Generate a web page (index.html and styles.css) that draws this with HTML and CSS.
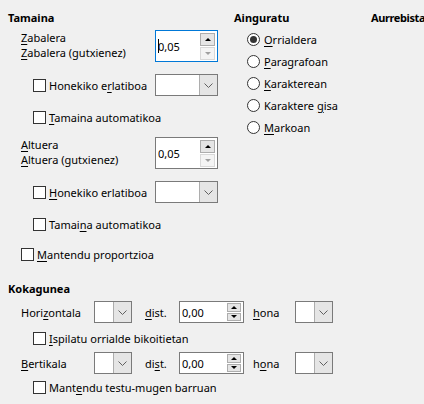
FILE: index.html
```html
<!DOCTYPE html>
<html lang="eu">
<head>
<meta charset="utf-8">
<title>Kokapena eta tamaina</title>
<link rel="stylesheet" href="styles.css">
</head>
<body>
<div class="dlg">
  <div class="top">
    <section class="size">
      <h3 class="hd">Tamaina</h3>
      <div class="dim">
        <div class="lbls"><span><u>Z</u>abalera</span><span><u>Z</u>abalera (gutxienez)</span></div>
        <div class="spin big focus">
          <span class="val"><i class="caret"></i>0,05</span>
          <span class="btns"><span class="sb up"><i class="tri-up"></i></span><span class="sb dn off"><i class="tri-dn"></i></span></span>
        </div>
      </div>
      <div class="crow r1">
        <label class="chk"><span class="box"></span><span>Honekiko e<u>r</u>latiboa</span></label>
        <div class="combo wide"><span class="cbtn"><svg width="9" height="5" viewBox="0 0 9 5"><path d="M0.5 0.5 L4.5 4.5 L8.5 0.5" fill="none" stroke="#606060" stroke-width="1"/></svg></span></div>
      </div>
      <div class="crow r2">
        <label class="chk"><span class="box"></span><span><u>T</u>amaina automatikoa</span></label>
      </div>
      <div class="dim d2">
        <div class="lbls"><span><u>A</u>ltuera</span><span><u>A</u>ltuera (gutxienez)</span></div>
        <div class="spin big">
          <span class="val">0,05</span>
          <span class="btns"><span class="sb up"><i class="tri-up"></i></span><span class="sb dn off"><i class="tri-dn"></i></span></span>
        </div>
      </div>
      <div class="crow r1">
        <label class="chk"><span class="box"></span><span><u>H</u>onekiko erlatiboa</span></label>
        <div class="combo wide"><span class="cbtn"><svg width="9" height="5" viewBox="0 0 9 5"><path d="M0.5 0.5 L4.5 4.5 L8.5 0.5" fill="none" stroke="#606060" stroke-width="1"/></svg></span></div>
      </div>
      <div class="crow r2">
        <label class="chk"><span class="box"></span><span>Tamai<u>n</u>a automatikoa</span></label>
      </div>
      <div class="crow r3">
        <label class="chk"><span class="box"></span><span><u>M</u>antendu proportzioa</span></label>
      </div>
    </section>
    <section class="anchor">
      <h3 class="hd">Ainguratu</h3>
      <div class="radios">
        <label class="rad"><span class="circ on"></span><span><u>O</u>rrialdera</span></label>
        <label class="rad"><span class="circ"></span><span><u>P</u>aragrafoan</span></label>
        <label class="rad"><span class="circ"></span><span><u>K</u>arakterean</span></label>
        <label class="rad"><span class="circ"></span><span>Karaktere <u>g</u>isa</span></label>
        <label class="rad"><span class="circ"></span><span><u>M</u>arkoan</span></label>
      </div>
    </section>
    <section class="preview">
      <h3 class="hd tight">Aurrebista</h3>
    </section>
  </div>
  <section class="pos">
    <h3 class="hd">Kokagunea</h3>
    <div class="prow p1">
      <span class="plbl">Hori<u>z</u>ontala</span>
      <div class="combo small"><span class="cbtn"><svg width="9" height="5" viewBox="0 0 9 5"><path d="M0.5 0.5 L4.5 4.5 L8.5 0.5" fill="none" stroke="#606060" stroke-width="1"/></svg></span></div>
      <span class="dist"><u>d</u>ist.</span>
      <div class="spin sm">
        <span class="val">0,00</span>
        <span class="btns"><span class="sb up"><i class="tri-up"></i></span><span class="sb dn"><i class="tri-dn"></i></span></span>
      </div>
      <span class="hona"><u>h</u>ona</span>
      <div class="combo small"><span class="cbtn"><svg width="9" height="5" viewBox="0 0 9 5"><path d="M0.5 0.5 L4.5 4.5 L8.5 0.5" fill="none" stroke="#606060" stroke-width="1"/></svg></span></div>
    </div>
    <div class="crow p2">
      <label class="chk"><span class="box"></span><span><u>I</u>spilatu orrialde bikoitietan</span></label>
    </div>
    <div class="prow p3">
      <span class="plbl"><u>B</u>ertikala</span>
      <div class="combo small"><span class="cbtn"><svg width="9" height="5" viewBox="0 0 9 5"><path d="M0.5 0.5 L4.5 4.5 L8.5 0.5" fill="none" stroke="#606060" stroke-width="1"/></svg></span></div>
      <span class="dist">di<u>s</u>t.</span>
      <div class="spin sm">
        <span class="val">0,00</span>
        <span class="btns"><span class="sb up"><i class="tri-up"></i></span><span class="sb dn"><i class="tri-dn"></i></span></span>
      </div>
      <span class="hona">h<u>o</u>na</span>
      <div class="combo small"><span class="cbtn"><svg width="9" height="5" viewBox="0 0 9 5"><path d="M0.5 0.5 L4.5 4.5 L8.5 0.5" fill="none" stroke="#606060" stroke-width="1"/></svg></span></div>
    </div>
    <div class="crow p4">
      <label class="chk"><span class="box"></span><span>Mant<u>e</u>ndu testu-mugen barruan</span></label>
    </div>
  </section>
</div>
</body>
</html>
```

FILE: styles.css
```css
html, body {
  margin: 0;
  padding: 0;
}
body {
  width: 424px;
  height: 404px;
  overflow: hidden;
  background: #f0f0f0;
  color: #000;
  font-family: "Noto Sans", "Open Sans", sans-serif;
  font-size: 11px;
  line-height: 15px;
}
u {
  text-decoration: underline;
  text-underline-offset: 2px;
  text-decoration-thickness: 1px;
}
.dlg {
  padding: 10px 0 0 8px;
}
.top {
  display: flex;
}
.hd {
  margin: 0;
  font-size: 11px;
  line-height: 15px;
  font-weight: bold;
  white-space: nowrap;
}
.hd.tight {
  letter-spacing: -0.4px;
}
.size {
  flex: none;
  width: 210px;
  display: flex;
  flex-direction: column;
}
.anchor {
  flex: none;
  margin-left: 16px;
  width: 137px;
}
.preview {
  flex: none;
}
.dim {
  display: flex;
  justify-content: space-between;
  margin: 5px 0 0 13px;
}
.dim.d2 {
  margin-top: 9px;
}
.lbls {
  display: flex;
  flex-direction: column;
}
.spin {
  box-sizing: border-box;
  border: 1px solid #7a7a7a;
  background: #fff;
  display: flex;
  align-items: center;
}
.spin.big {
  width: 63px;
  height: 32px;
}
.spin.focus {
  border-color: #0078d7;
}
.spin.sm {
  width: 65px;
  height: 22px;
}
.val {
  flex: 1;
  padding-left: 2px;
  display: flex;
  align-items: center;
}
.caret {
  display: inline-block;
  width: 1px;
  height: 14px;
  background: #000;
  margin-right: -1px;
}
.btns {
  display: flex;
  flex-direction: column;
  align-self: stretch;
  justify-content: center;
  margin: 1px 2px 1px 0;
  gap: 1px;
}
.sb {
  box-sizing: border-box;
  width: 15px;
  border: 1px solid #adadad;
  background: #e5e5e5;
  display: flex;
  align-items: center;
  justify-content: center;
}
.big .sb {
  height: 13px;
}
.sm .sb {
  height: 9px;
  width: 14px;
}
.sb.off {
  border-color: #d9d9d9;
  background: #f4f4f4;
}
.tri-up, .tri-dn {
  display: block;
  width: 0;
  height: 0;
  border-left: 3px solid transparent;
  border-right: 3px solid transparent;
}
.tri-up {
  border-bottom: 3px solid #000;
}
.tri-dn {
  border-top: 3px solid #000;
}
.off .tri-dn {
  border-top-color: #a0a0a0;
}
.crow {
  display: flex;
  justify-content: space-between;
  align-items: center;
  height: 22px;
  padding-left: 25px;
}
.crow.r1 {
  margin-top: 12px;
}
.crow.r2 {
  margin-top: 10px;
}
.crow.r3 {
  margin-top: 8px;
  padding-left: 13px;
}
.chk {
  display: flex;
  align-items: center;
  white-space: nowrap;
}
.box {
  flex: none;
  box-sizing: border-box;
  width: 13px;
  height: 13px;
  border: 1px solid #333;
  background: #fff;
  margin-right: 3px;
}
.combo {
  flex: none;
  box-sizing: border-box;
  height: 22px;
  border: 1px solid #7a7a7a;
  background: #fff;
  display: flex;
  justify-content: flex-end;
}
.combo.wide {
  width: 63px;
}
.combo.small {
  width: 38px;
}
.cbtn {
  width: 17px;
  border-left: 1px solid #adadad;
  background: #e5e5e5;
  display: flex;
  align-items: center;
  justify-content: center;
}
.radios {
  display: flex;
  flex-direction: column;
  margin-top: 3px;
}
.rad {
  display: flex;
  align-items: center;
  height: 22px;
  padding-left: 13px;
  white-space: nowrap;
}
.circ {
  flex: none;
  box-sizing: border-box;
  width: 13px;
  height: 13px;
  border: 1px solid #333;
  border-radius: 50%;
  background: #fff;
  margin-right: 4px;
  display: flex;
  align-items: center;
  justify-content: center;
}
.circ.on::after {
  content: "";
  width: 7px;
  height: 7px;
  border-radius: 50%;
  background: #333;
}
.pos {
  margin-top: 16px;
}
.prow {
  display: flex;
  align-items: center;
  height: 22px;
  padding-left: 13px;
  white-space: nowrap;
}
.prow.p1 {
  margin-top: 5px;
}
.prow.p3 {
  margin-top: 3px;
}
.crow.p2 {
  margin-top: 4px;
}
.crow.p4 {
  margin-top: 2px;
}
.plbl {
  width: 73px;
}
.dist {
  margin-left: 13px;
  width: 34px;
}
.hona {
  margin-left: 9px;
  width: 42px;
}
```
